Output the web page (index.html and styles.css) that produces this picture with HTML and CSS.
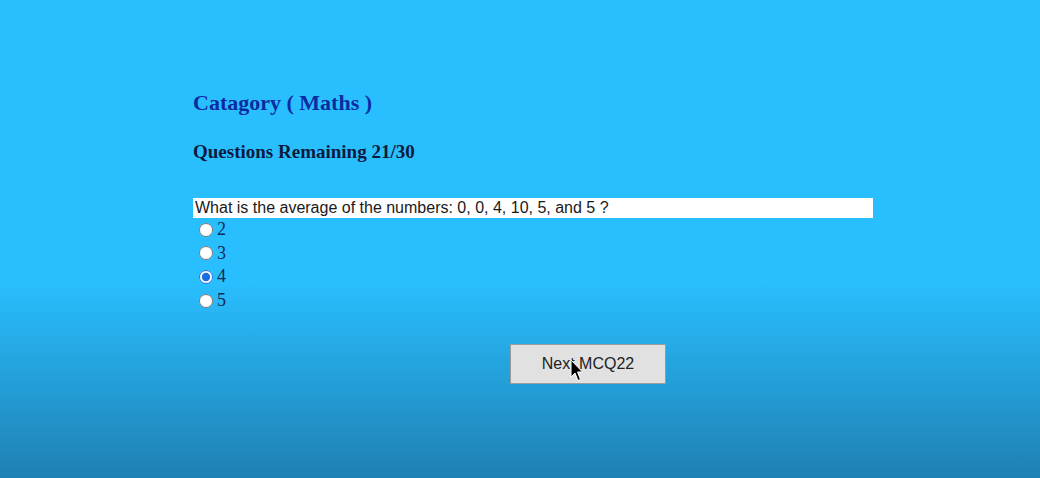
FILE: index.html
```html
<!DOCTYPE html>
<html>
<head>
<meta charset="utf-8">
<link rel="stylesheet" href="styles.css">
</head>
<body>
<main class="quiz">
  <h2 class="category">Catagory ( Maths )</h2>
  <h3 class="remaining">Questions Remaining 21/30</h3>
  <div class="question">What is the average of the numbers: 0, 0, 4, 10, 5, and 5 ?</div>
  <div class="options">
    <label class="option"><input type="radio" name="ans"><span>2</span></label>
    <label class="option"><input type="radio" name="ans"><span>3</span></label>
    <label class="option"><input type="radio" name="ans" checked><span>4</span></label>
    <label class="option"><input type="radio" name="ans"><span>5</span></label>
  </div>
  <div class="actions">
    <button class="next">Next MCQ22</button>
    <svg class="cursor" width="14" height="24" viewBox="0 0 14 24">
      <path d="M1 1 L1 18 L5 14 L8 21.5 L10.5 20.5 L7.5 13 L12.5 13 Z" fill="#000" stroke="#fff" stroke-width="1"/>
    </svg>
  </div>
</main>
</body>
</html>
```
FILE: styles.css
```css
html, body {
  margin: 0;
  padding: 0;
  height: 100%;
}
body {
  background: linear-gradient(to bottom, #29bfff 0px, #29bfff 280px, #1f80b3 478px);
  font-family: "Liberation Serif", "Times New Roman", serif;
  overflow: hidden;
}
.quiz {
  padding: 90px 0 0 193px;
  width: 680px;
}
.category {
  margin: 0;
  font-size: 22px;
  font-weight: bold;
  color: #0b2ca0;
  line-height: 26px;
}
.remaining {
  margin: 25px 0 0;
  font-size: 19px;
  font-weight: bold;
  color: #0c1a3e;
  line-height: 22px;
}
.question {
  margin-top: 35px;
  background: #fff;
  height: 20px;
  line-height: 20px;
  padding-left: 2px;
  font-family: "Liberation Sans", Arial, sans-serif;
  font-size: 16px;
  color: #1a1a1a;
}
.options {
  display: flex;
  flex-direction: column;
  padding-left: 6px;
  margin-top: 0;
}
.option {
  display: flex;
  align-items: center;
  height: 23.6px;
  font-size: 18px;
  color: #0d2a5a;
}
.option input {
  margin: 0 4px 0 0;
  width: 14px;
  height: 14px;
  accent-color: #1a6fe0;
}
.actions {
  position: relative;
  margin-top: 32px;
  padding-left: 317px;
}
.next {
  width: 156px;
  height: 40px;
  background: #e1e1e1;
  border: 1px solid #9a9a9a;
  border-radius: 0;
  font-family: "Liberation Sans", Arial, sans-serif;
  font-size: 16px;
  color: #222;
}
.cursor {
  position: absolute;
  left: 377px;
  top: 15px;
}
```
